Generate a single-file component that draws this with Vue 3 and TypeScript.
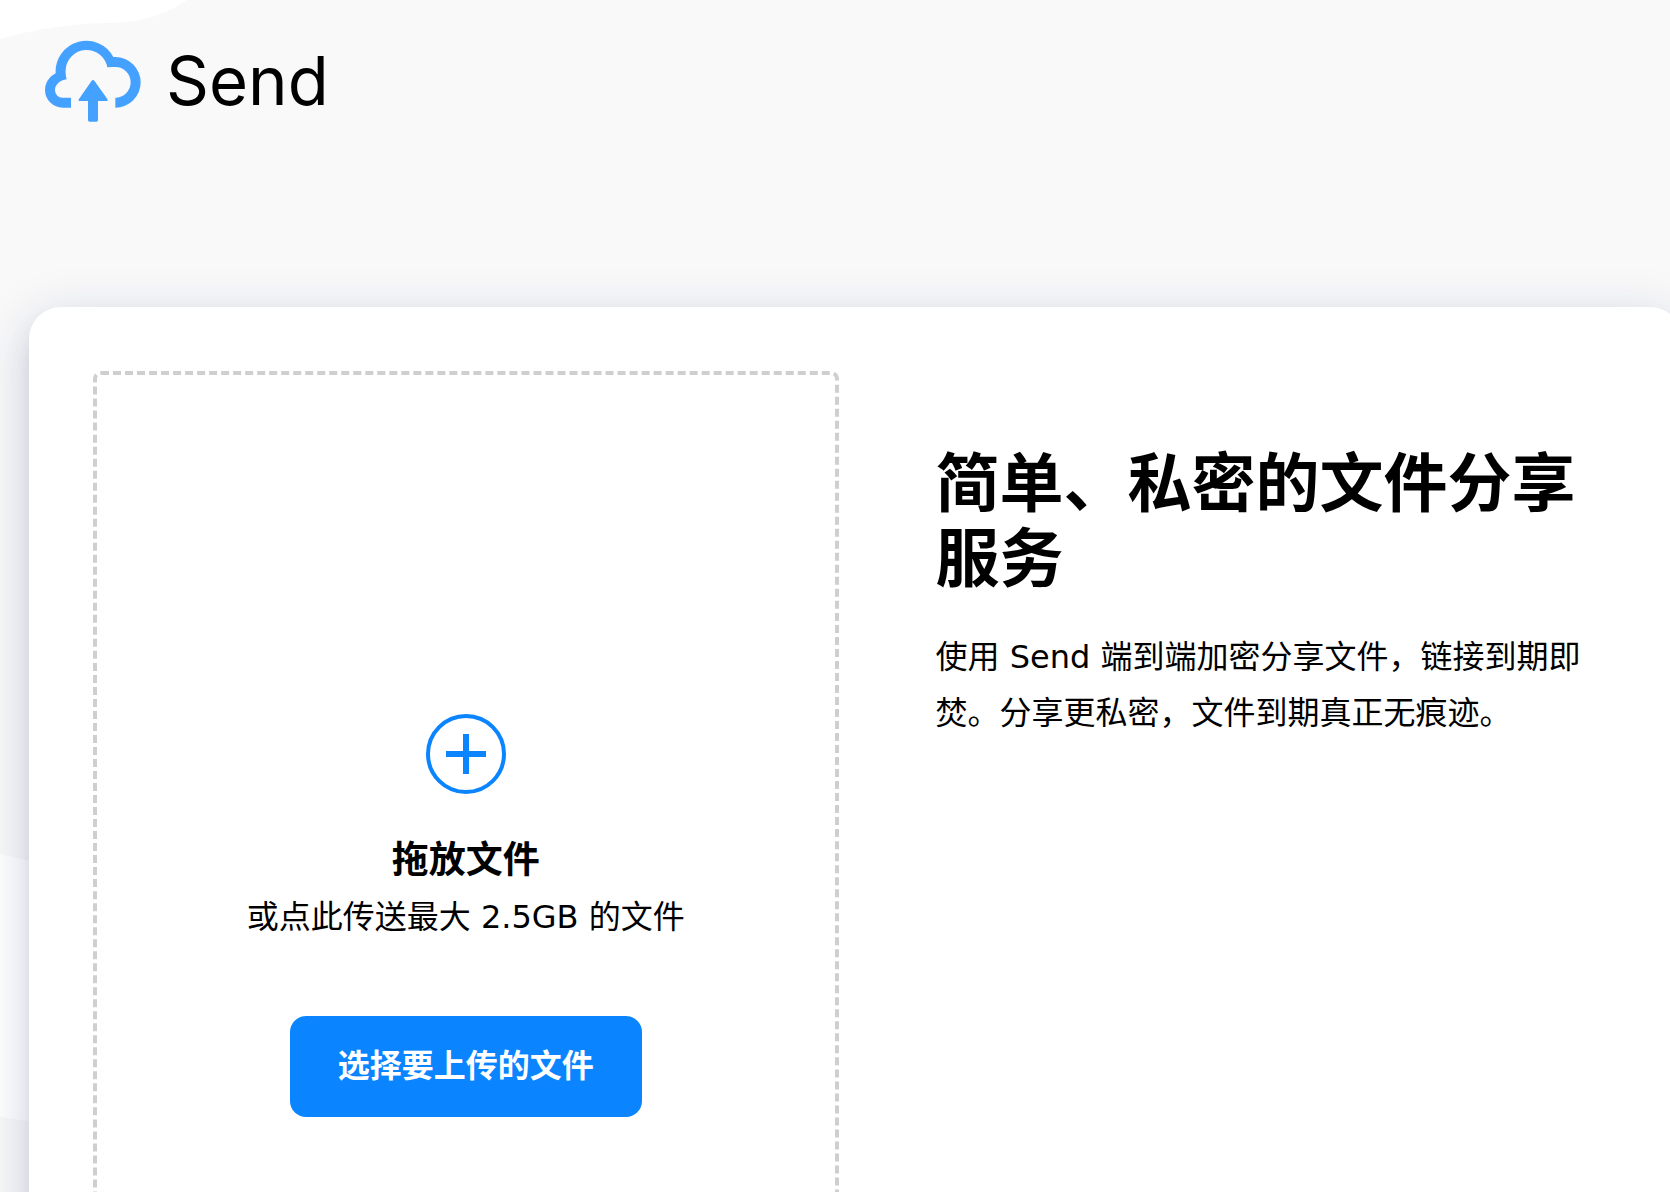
<script setup lang="ts">
import { ref } from 'vue'

const maxSize = '2.5GB'
const picker = ref<HTMLInputElement | null>(null)

function openPicker(): void {
  picker.value?.click()
}
</script>

<template>
  <div class="page">
    <svg class="waves" width="400" height="1200" viewBox="0 0 400 1200" aria-hidden="true">
      <path d="M0 0H187C165 15 140 23 105 23C65 24 32 30 0 39Z" />
      <path d="M0 854Q50 867 100 870V1130Q50 1125 0 1117Z" />
    </svg>

    <header class="header">
      <a class="brand" href="#">
        <svg class="brand-icon" viewBox="45 41 288 247" aria-hidden="true">
          <path
            d="M123 246H98A53 53 0 0 1 45 194C45 172 57 153 77 143A92 92 0 0 1 250 94H256A76 76 0 0 1 256 246V216A46 46 0 0 0 256 124Q243 123 232 125A63 63 0 0 0 107 133Q106 148 110 161C90 164 75 176 75 194A22 22 0 0 0 98 216H123Z"
          />
          <path
            d="M185 165Q189 161 193 165L232 220Q235 226 229 226H204V283Q204 288 199 288H179Q174 288 174 283V226H150Q143 226 147 220Z"
          />
        </svg>
        <span class="brand-name">Send</span>
      </a>
    </header>

    <main class="card">
      <section class="drop">
        <svg class="plus" viewBox="0 0 80 80" aria-hidden="true">
          <circle cx="40" cy="40" r="38" stroke-width="4" />
          <path d="M20 40H60M40 20V60" stroke-width="6" />
        </svg>
        <h2 class="drop-title">拖放文件</h2>
        <p class="drop-hint">或点此传送最大 {{ maxSize }} 的文件</p>
        <input ref="picker" type="file" multiple hidden aria-label="选择要上传的文件" />
        <button class="pick" type="button" @click="openPicker">选择要上传的文件</button>
      </section>
      <section class="intro">
        <h1 class="intro-title">简单、私密的文件分享服务</h1>
        <p class="intro-text">使用 Send 端到端加密分享文件，链接到期即焚。分享更私密，文件到期真正无痕迹。</p>
      </section>
    </main>
  </div>
</template>

<style>
body {
  margin: 0;
}
</style>

<style scoped>
.page {
  position: relative;
  height: 100vh;
  overflow: hidden;
  background: #f9f9f9;
  color: #000;
  font-family: 'DejaVu Sans', 'Noto Sans CJK SC', sans-serif;
  font-size: 32px;
}

.waves {
  position: absolute;
  top: 0;
  left: 0;
  fill: #fff;
}

.header {
  position: relative;
  display: flex;
  padding: 39px 45px 0;
}

.brand {
  display: flex;
  align-items: center;
  gap: 25px;
  color: #000;
  text-decoration: none;
}

.brand-icon {
  width: 96px;
  height: 83px;
  fill: #45a1ff;
}

.brand-name {
  font-family: Inter, sans-serif;
  font-size: 67px;
  font-weight: 400;
  line-height: 83px;
}

.card {
  position: relative;
  display: grid;
  grid-template-columns: 1fr 1fr;
  gap: 34px;
  margin: 185px -12px 0 29px;
  padding: 64px;
  border-radius: 32px;
  background: #fff;
  box-shadow:
    0 24px 36px 4px rgba(34, 0, 51, 0.04),
    0 12px 48px 8px rgba(7, 42, 124, 0.13),
    0 12px 20px -8px rgba(14, 13, 26, 0.12);
}

.drop {
  display: flex;
  flex-direction: column;
  align-items: center;
  justify-content: center;
  box-sizing: border-box;
  min-height: 1088px;
  border: 4px dashed #cfcfcf;
  border-radius: 8px;
}

.plus {
  width: 80px;
  height: 80px;
  fill: none;
  stroke: #0a84ff;
}

.drop-title {
  margin: 39px 0 0;
  font-size: 37px;
  font-weight: 700;
  line-height: 56px;
}

.drop-hint {
  margin: 0 0 71px;
  line-height: 56px;
}

.pick {
  padding: 0 48px;
  border: 0;
  border-radius: 16px;
  background: #0a84ff;
  color: #fff;
  font: inherit;
  font-weight: 700;
  line-height: 101px;
  cursor: pointer;
}

.intro {
  padding: 76px 32px 0 63px;
}

.intro-title {
  margin: 0;
  font-size: 64px;
  font-weight: 700;
  line-height: 75px;
}

.intro-text {
  margin: 32px 0 0;
  line-height: 56px;
}
</style>
